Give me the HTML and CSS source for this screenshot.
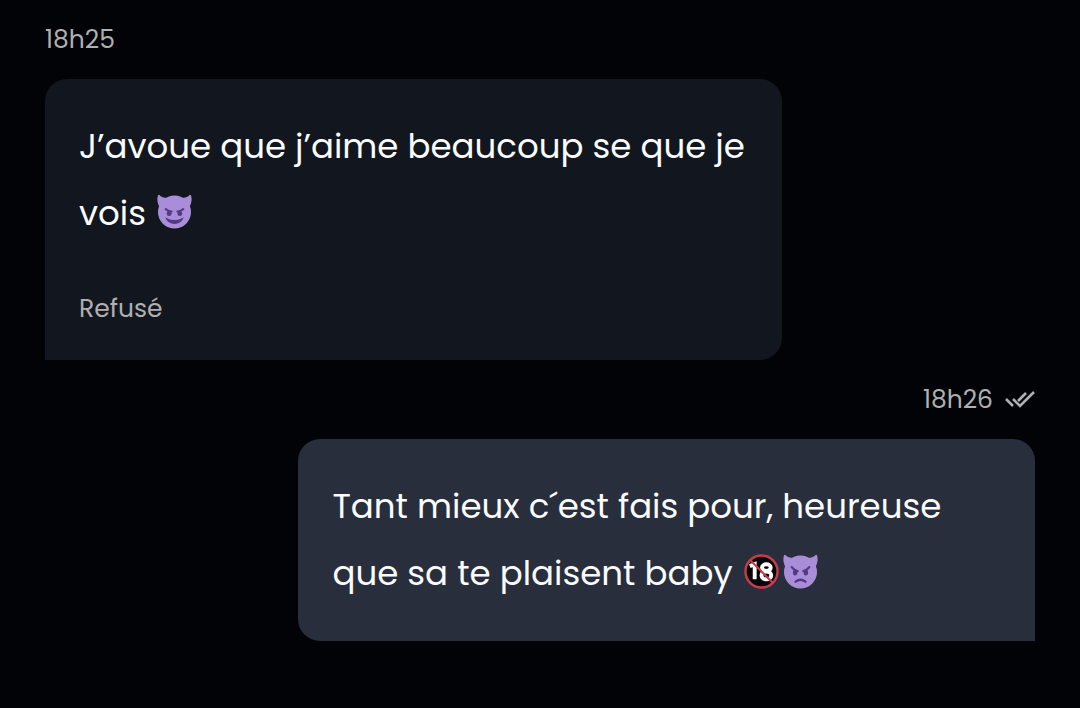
FILE: index.html
```html
<!DOCTYPE html>
<html lang="fr">
<head>
<meta charset="utf-8">
<meta name="viewport" content="width=device-width, initial-scale=1">
<title>Messages</title>
<link rel="stylesheet" href="styles.css">
</head>
<body>
<main class="chat">
  <article class="message received">
    <div class="meta"><time datetime="18:25">18h25</time></div>
    <div class="bubble">
      <p class="text">J’avoue que j’aime beaucoup se que je vois <span class="emojis"><svg class="emoji" viewBox="0 0 36 36" role="img" aria-label="Diablotin souriant"><g fill="#aa8dd8"><circle cx="18" cy="18.500" r="17"/><path d="M3 14C0 9 0 5 1 1.500q1-1.500 2 0Q5 4 11 4zM33 14c3-5 3-9 2-12.500q-1-1.500-2 0Q31 4 25 4z"/></g><g fill="none" stroke="#553986" stroke-width="2.200" stroke-linecap="round"><path d="M9 15.500q3 2.500 6 2.500M27 15.500q-3 2.500-6 2.500"/><path fill="#553986" stroke-width="1.500" d="M10 25.500q8 4 16 0-2 4.500-8 4.500t-8-4.500z"/></g><g fill="#553986"><ellipse cx="12.500" cy="20" rx="2.500" ry="2.600"/><ellipse cx="23.500" cy="20" rx="2.500" ry="2.600"/></g></svg></span></p>
      <p class="status">Refusé</p>
    </div>
  </article>
  <article class="message sent">
    <div class="meta"><time datetime="18:26">18h26</time><svg class="checks" viewBox="0 0 30 18" role="img" aria-label="Lu"><path d="M1 8l7 7M8 8l7 7L29 1M13 10l8-8" fill="none" stroke="#b0b0b2" stroke-width="2.600"/></svg></div>
    <div class="bubble">
      <p class="text">Tant mieux c´est fais pour, heureuse que sa te plaisent baby <span class="emojis"><svg class="emoji" viewBox="0 0 36 36" role="img" aria-label="Interdit aux moins de 18 ans"><circle cx="18" cy="18" r="17" fill="#050507"/><g fill="none" stroke="#fff" stroke-width="4"><path d="M6 12.500l5-2V26"/><ellipse cx="23" cy="14" rx="4.500" ry="3.500"/><ellipse cx="23" cy="22" rx="5" ry="4"/></g><path d="M6 6l24 24" stroke="#c93a4c" stroke-width="2.200"/><circle cx="18" cy="18" r="16.500" fill="none" stroke="#c93a4c" stroke-width="2.500"/></svg><svg class="emoji" viewBox="0 0 36 36" role="img" aria-label="Diablotin en colère"><g fill="#aa8dd8"><circle cx="18" cy="18.500" r="17"/><path d="M3 14C0 9 0 5 1 1.500q1-1.500 2 0Q5 4 11 4zM33 14c3-5 3-9 2-12.500q-1-1.500-2 0Q31 4 25 4z"/></g><g fill="none" stroke="#553986" stroke-width="2.400" stroke-linecap="round"><path d="M9 13.500q2 3 6 4M27 13.500q-2 3-6 4M13 28.500q5-4 10 0"/></g><g fill="#553986"><ellipse cx="12.500" cy="19" rx="2.300" ry="3"/><ellipse cx="23.500" cy="19" rx="2.300" ry="3"/></g></svg></span></p>
    </div>
  </article>
</main>
</body>
</html>
```
FILE: styles.css
```css
* { box-sizing: border-box; }

body {
  margin: 0;
  background: #020307;
  color: #fafbfd;
  font-family: Poppins, Inter, sans-serif;
}

.chat {
  display: flex;
  flex-direction: column;
  padding: 0 45px 67px;
}

.message {
  display: flex;
  flex-direction: column;
  align-items: flex-start;
}

.sent { align-items: flex-end; }

.meta {
  display: flex;
  align-items: center;
  gap: 12px;
  height: 79px;
  color: #b0b0b0;
  font-size: 25px;
}

.bubble {
  width: 74.4%;
  padding: 34px;
  border-radius: 22px;
}

.received .bubble {
  background: #12161e;
  border-bottom-left-radius: 0;
}

.sent .bubble {
  background: #282e3c;
  border-bottom-right-radius: 0;
}

.text {
  margin: 0;
  font-size: 34px;
  line-height: 67px;
}

.status {
  margin: 45px 0 0;
  color: #b0b0b0;
  font-size: 25px;
  line-height: 34px;
}

.emojis {
  display: inline-flex;
  gap: 4px;
  margin-left: 2px;
  vertical-align: -4px;
}

.emoji {
  width: 35px;
  height: 35px;
}

.checks {
  width: 30px;
  height: 18px;
}
```
